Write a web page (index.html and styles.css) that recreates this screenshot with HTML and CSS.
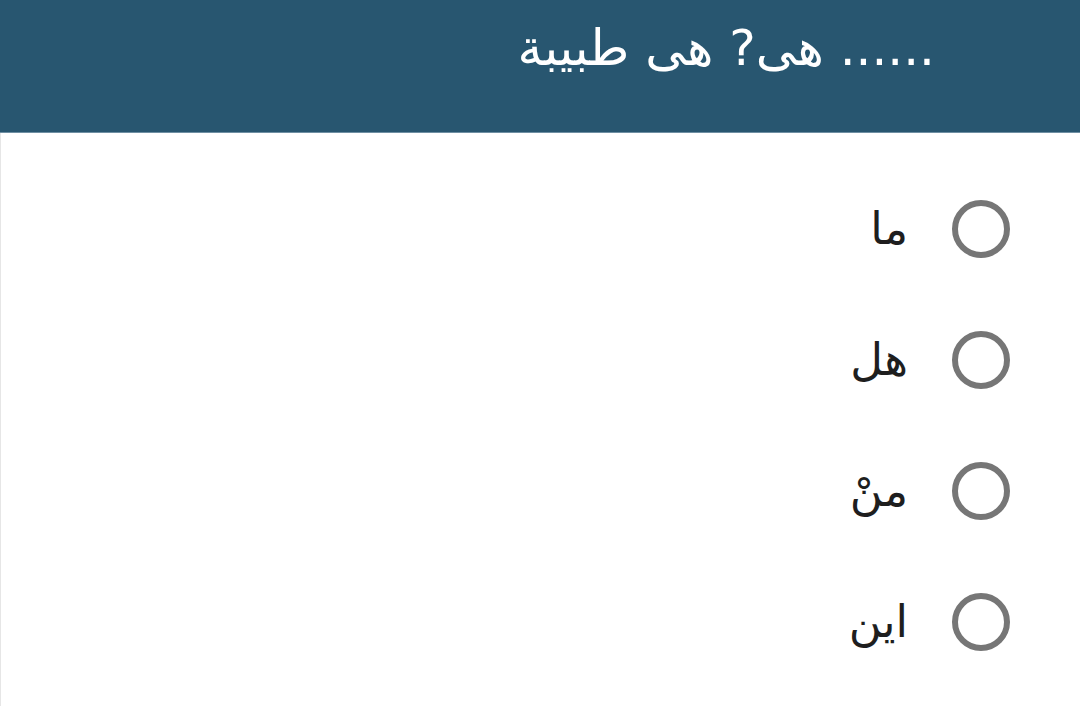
FILE: index.html
```html
<!DOCTYPE html>
<html lang="ar" dir="rtl">
<head>
<meta charset="utf-8">
<link rel="stylesheet" href="styles.css">
</head>
<body>
<header class="top-bar">
  <h1 class="question">...... هى? هى طبيبة</h1>
</header>
<main class="answers">
  <label class="option"><span class="radio"></span><span class="option-text">ما</span></label>
  <label class="option"><span class="radio"></span><span class="option-text">هل</span></label>
  <label class="option"><span class="radio"></span><span class="option-text">منْ</span></label>
  <label class="option"><span class="radio"></span><span class="option-text">اين</span></label>
</main>
</body>
</html>
```
FILE: styles.css
```css
html, body {
  margin: 0;
  padding: 0;
  background: #ffffff;
  height: 100%;
}
body {
  font-family: "DejaVu Sans", sans-serif;
  overflow: hidden;
}
.top-bar {
  height: 133px;
  box-sizing: border-box;
  background: #285670;
  border-bottom: 1px solid #6f8fa3;
  padding: 10px 145px 0 0;
}
.question {
  margin: 0;
  color: #ffffff;
  font-weight: normal;
  font-size: 50px;
  line-height: 76px;
}
.answers {
  border-left: 1px solid #e6e6e6;
  height: calc(100% - 133px);
  box-sizing: border-box;
  padding: 30px 70px 0 0;
  display: flex;
  flex-direction: column;
}
.option {
  display: flex;
  align-items: center;
  gap: 44px;
  height: 131px;
}
.radio {
  width: 58px;
  height: 58px;
  box-sizing: border-box;
  border: 6px solid #767676;
  border-radius: 50%;
  flex: none;
}
.option-text {
  font-size: 45px;
  color: #1e1e1e;
}
```
